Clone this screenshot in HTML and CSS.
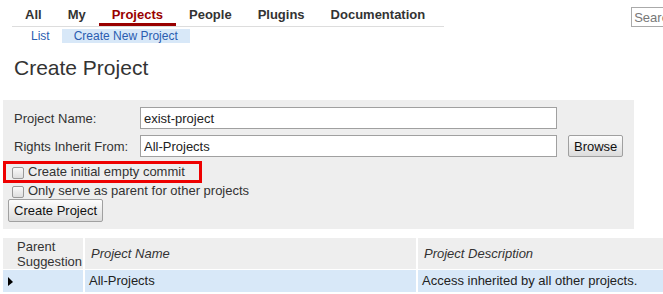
FILE: index.html
```html
<!DOCTYPE html>
<html lang="en">
<head>
  <meta charset="UTF-8">
  <meta name="viewport" content="width=device-width, initial-scale=1.0">
  <title>Create Project</title>
  <link rel="stylesheet" href="styles.css">
</head>
<body>
  <div class="page">
    <div class="topbar">
      <div class="menu">
        <a class="menu-item" href="#">All</a>
        <a class="menu-item" href="#">My</a>
        <a class="menu-item active" href="#">Projects</a>
        <a class="menu-item" href="#">People</a>
        <a class="menu-item" href="#">Plugins</a>
        <a class="menu-item" href="#">Documentation</a>
      </div>
      <input class="search" type="text" placeholder="Search">
    </div>

    <div class="submenu">
      <a class="sub-item" href="#">List</a>
      <a class="sub-item selected" href="#">Create New Project</a>
    </div>

    <h1 class="title">Create Project</h1>

    <div class="panel">
      <div class="fields">
        <label class="field-label" for="projectName">Project Name:</label>
        <input class="field-input" id="projectName" type="text" value="exist-project">
        <span></span>
        <label class="field-label" for="parentName">Rights Inherit From:</label>
        <input class="field-input" id="parentName" type="text" value="All-Projects">
        <button class="btn">Browse</button>
      </div>

      <label class="check-row highlight">
        <input class="check" type="checkbox">
        <span>Create initial empty commit</span>
      </label>
      <label class="check-row">
        <input class="check" type="checkbox">
        <span>Only serve as parent for other projects</span>
      </label>

      <button class="btn create-btn">Create Project</button>
    </div>

    <table class="suggestions">
      <thead>
        <tr>
          <th class="col-pick">Parent Suggestion</th>
          <th class="col-name">Project Name</th>
          <th class="col-desc">Project Description</th>
        </tr>
      </thead>
      <tbody>
        <tr class="current">
          <td class="col-pick"><span class="pointer"></span></td>
          <td class="col-name">All-Projects</td>
          <td class="col-desc">Access inherited by all other projects.</td>
        </tr>
      </tbody>
    </table>
  </div>
</body>
</html>
```

FILE: styles.css
```css
body {
  margin: 0;
  font-family: "Liberation Sans", Arial, sans-serif;
  font-size: 13px;
  color: #333;
  background-color: #fff;
}

.page {
  width: 663px;
  height: 294px;
  overflow: hidden;
}

.topbar {
  display: flex;
  align-items: flex-start;
}

.menu {
  display: flex;
  margin-left: 12px;
  padding-right: 6px;
  border-bottom: 1px solid #ddd;
  flex-shrink: 0;
}

.menu-item {
  padding: 7px 13px 0;
  line-height: 16px;
  font-weight: bold;
  color: #333;
  text-decoration: none;
  border-bottom: 3px solid transparent;
}

.menu-item.active {
  color: #990000;
  border-bottom-color: #990000;
}

.search {
  flex-shrink: 0;
  box-sizing: border-box;
  width: 120px;
  height: 20px;
  margin: 7px 0 0 187px;
  padding: 0 2px;
  border: 1px solid #aaa;
  font-family: inherit;
  font-size: 13px;
  color: #333;
}

.search::placeholder {
  color: #777;
}

.submenu {
  display: flex;
  margin: 2px 0 0 19px;
}

.sub-item {
  padding: 0 12px;
  font-size: 12px;
  line-height: 14px;
  color: #2a5db0;
  text-decoration: none;
}

.sub-item.selected {
  background-color: #d8e8f8;
}

.title {
  margin: 12px 0 0 14px;
  font-size: 21px;
  line-height: 26px;
  font-weight: normal;
  color: #333;
}

.panel {
  width: 631px;
  margin: 19px 0 0 3px;
  padding: 7px 0 7px;
  background-color: #eee;
}

.fields {
  display: grid;
  grid-template-columns: 115px 417px auto;
  column-gap: 11px;
  row-gap: 6px;
  align-items: center;
  margin-left: 11px;
}

.field-label {
  color: #333;
}

.field-input {
  box-sizing: border-box;
  width: 417px;
  height: 22px;
  padding: 0 3px;
  border: 1px solid #a0a0a0;
  background-color: #fff;
  font-family: inherit;
  font-size: 13px;
  color: #222;
}

.btn {
  box-sizing: border-box;
  height: 22px;
  padding: 0 5px;
  border: 1px solid #a0a0a0;
  border-radius: 2px;
  background: linear-gradient(#fdfdfd, #dcdcdc);
  font-family: inherit;
  font-size: 13px;
  color: #111;
  justify-self: start;
}

.check-row {
  display: flex;
  align-items: center;
  width: fit-content;
  line-height: 16px;
  padding-left: 9px;
}

.check-row.highlight {
  margin-top: 4px;
  padding: 0 14px 0 6px;
  border: 3px solid #ee0000;
}

.check {
  appearance: none;
  box-sizing: border-box;
  width: 12px;
  height: 12px;
  margin: 1px 4px 0 0;
  border: 1px solid #999;
  border-radius: 2px;
  background: linear-gradient(#fafafa, #dedede);
}

.create-btn {
  display: block;
  height: 23px;
  margin: 0 0 0 5px;
}

.suggestions {
  table-layout: fixed;
  width: 700px;
  margin: 9px 0 0 3px;
  border-collapse: separate;
  border-spacing: 0;
}

.suggestions th {
  box-sizing: border-box;
  height: 32px;
  padding: 0 0 0 6px;
  background-color: #eee;
  border-right: 2px solid #fff;
  border-bottom: 1px solid #fff;
  font-weight: normal;
  font-style: italic;
  line-height: 15px;
  text-align: left;
  color: #333;
}

.suggestions th.col-pick {
  width: 82px;
  padding: 0 1px 0 14px;
  font-style: normal;
}

.suggestions th.col-name {
  width: 333px;
}

.suggestions td {
  height: 22px;
  padding: 0 0 0 4px;
  background-color: #d8e8f8;
  border-right: 2px solid #fff;
  line-height: 16px;
  color: #222;
}

.suggestions td.col-pick {
  padding-left: 5px;
}

.pointer {
  display: block;
  width: 0;
  height: 0;
  border-left: 5px solid #000;
  border-top: 5px solid transparent;
  border-bottom: 4px solid transparent;
}
```
